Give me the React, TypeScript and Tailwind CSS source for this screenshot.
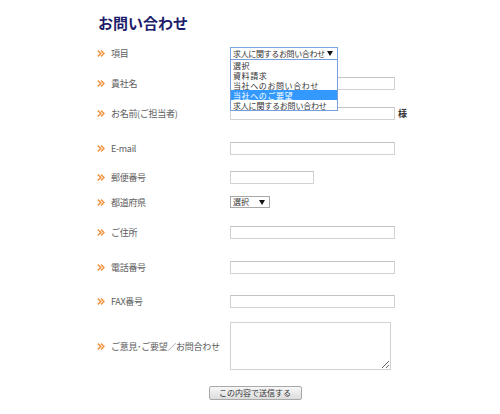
import React from "react";

const Arrow = () => (
  <svg width="8" height="7" viewBox="0 0 8 7" className="block shrink-0">
    <path d="M0.8 0.6 L3.8 3.5 L0.8 6.4" fill="none" stroke="#f39644" strokeWidth="1.5" />
    <path d="M4 0.6 L7 3.5 L4 6.4" fill="none" stroke="#f39644" strokeWidth="1.5" />
  </svg>
);

const Tri = () => (
  <svg width="6" height="5" viewBox="0 0 6 5" className="block shrink-0">
    <polygon points="0,0 6,0 3,5" fill="#111" />
  </svg>
);

function Row({ label, h, children }: { label: string; h: string; children: React.ReactNode }) {
  return (
    <div className={`flex items-center ${h}`}>
      <div className="flex w-[133px] items-center">
        <Arrow />
        <span className="ml-[6px] whitespace-nowrap text-[9px] leading-[11px] tracking-[-0.3px] text-[#5e5e5e]">
          {label}
        </span>
      </div>
      <div className="flex items-center">{children}</div>
    </div>
  );
}

const TextInput = ({ w }: { w: string }) => (
  <input
    type="text"
    className={`block h-[13px] ${w} border border-[#d2d2d2] border-t-[#c4c4c4] bg-white p-0 outline-none`}
  />
);

const items = ["選択", "資料請求", "当社へのお問い合わせ", "当社へのご要望", "求人に関するお問い合わせ"];

export default function App() {
  return (
    <div className="h-[414px] w-[500px] overflow-hidden bg-white font-['Noto_Sans_CJK_JP',sans-serif]">
      <div className="ml-[97px] w-[316px]">
        <h1 className="h-[38px] pl-[1px] pt-[15px] text-[15px] font-bold leading-[16px] text-[#1d1d6b]">
          お問い合わせ
        </h1>

        <Row label="項目" h="h-[31px]">
          <div className="relative z-10">
            <div className="flex h-[13px] w-[108px] items-center justify-between border border-[#7ea6e0] bg-white pl-[2px] pr-[4px]">
              <span className="whitespace-nowrap text-[8px] leading-[10px] tracking-[-0.35px] text-[#333]">
                求人に関するお問い合わせ
              </span>
              <Tri />
            </div>
            <div className="absolute left-0 top-[12px] w-[108px] border border-[#7a9fd8] bg-white">
              {items.map((it) => (
                <div
                  key={it}
                  className={`flex h-[10px] items-center whitespace-nowrap pl-[2px] ${
                    it === "当社へのご要望" ? "bg-[#3399ff] text-white" : "text-[#333]"
                  }`}
                >
                  <span
                    className={`text-[8px] leading-[9px] ${
                      it === "求人に関するお問い合わせ" ? "tracking-[-0.2px]" : "tracking-[0.6px]"
                    }`}
                  >
                    {it}
                  </span>
                </div>
              ))}
            </div>
          </div>
        </Row>

        <Row label="貴社名" h="h-[29px]">
          <TextInput w="w-[165px]" />
        </Row>

        <Row label="お名前(ご担当者)" h="h-[30px]">
          <TextInput w="w-[165px]" />
          <span className="ml-[3px] text-[9px] font-bold leading-[11px] text-[#333]">様</span>
        </Row>

        <Row label="E-mail" h="h-[40px]">
          <TextInput w="w-[165px]" />
        </Row>

        <Row label="郵便番号" h="h-[19px]">
          <TextInput w="w-[84px]" />
        </Row>

        <Row label="都道府県" h="h-[30px]">
          <div className="flex h-[12px] w-[40px] items-center justify-between border border-[#a8a8a8] bg-white pl-[2px] pr-[4px]">
            <span className="whitespace-nowrap text-[8px] leading-[10px] text-[#333]">選択</span>
            <Tri />
          </div>
        </Row>

        <Row label="ご住所" h="h-[30px]">
          <TextInput w="w-[165px]" />
        </Row>

        <Row label="電話番号" h="h-[40px]">
          <TextInput w="w-[165px]" />
        </Row>

        <Row label="FAX番号" h="h-[29px]">
          <TextInput w="w-[165px]" />
        </Row>

        <Row label="ご意見･ご要望／お問合わせ" h="h-[60px]">
          <textarea className="block h-[48px] w-[161px] resize border border-[#d2d2d2] bg-white p-0 outline-none" />
        </Row>

        <div className="mt-[10px] flex justify-center">
          <button className="flex h-[14px] w-[93px] items-center justify-center rounded-[2px] border border-[#a9a9a9] bg-linear-to-b from-[#f7f7f7] to-[#dcdcdc] p-0 text-[8px] leading-[10px] text-[#333]">
            この内容で送信する
          </button>
        </div>
      </div>
    </div>
  );
}
